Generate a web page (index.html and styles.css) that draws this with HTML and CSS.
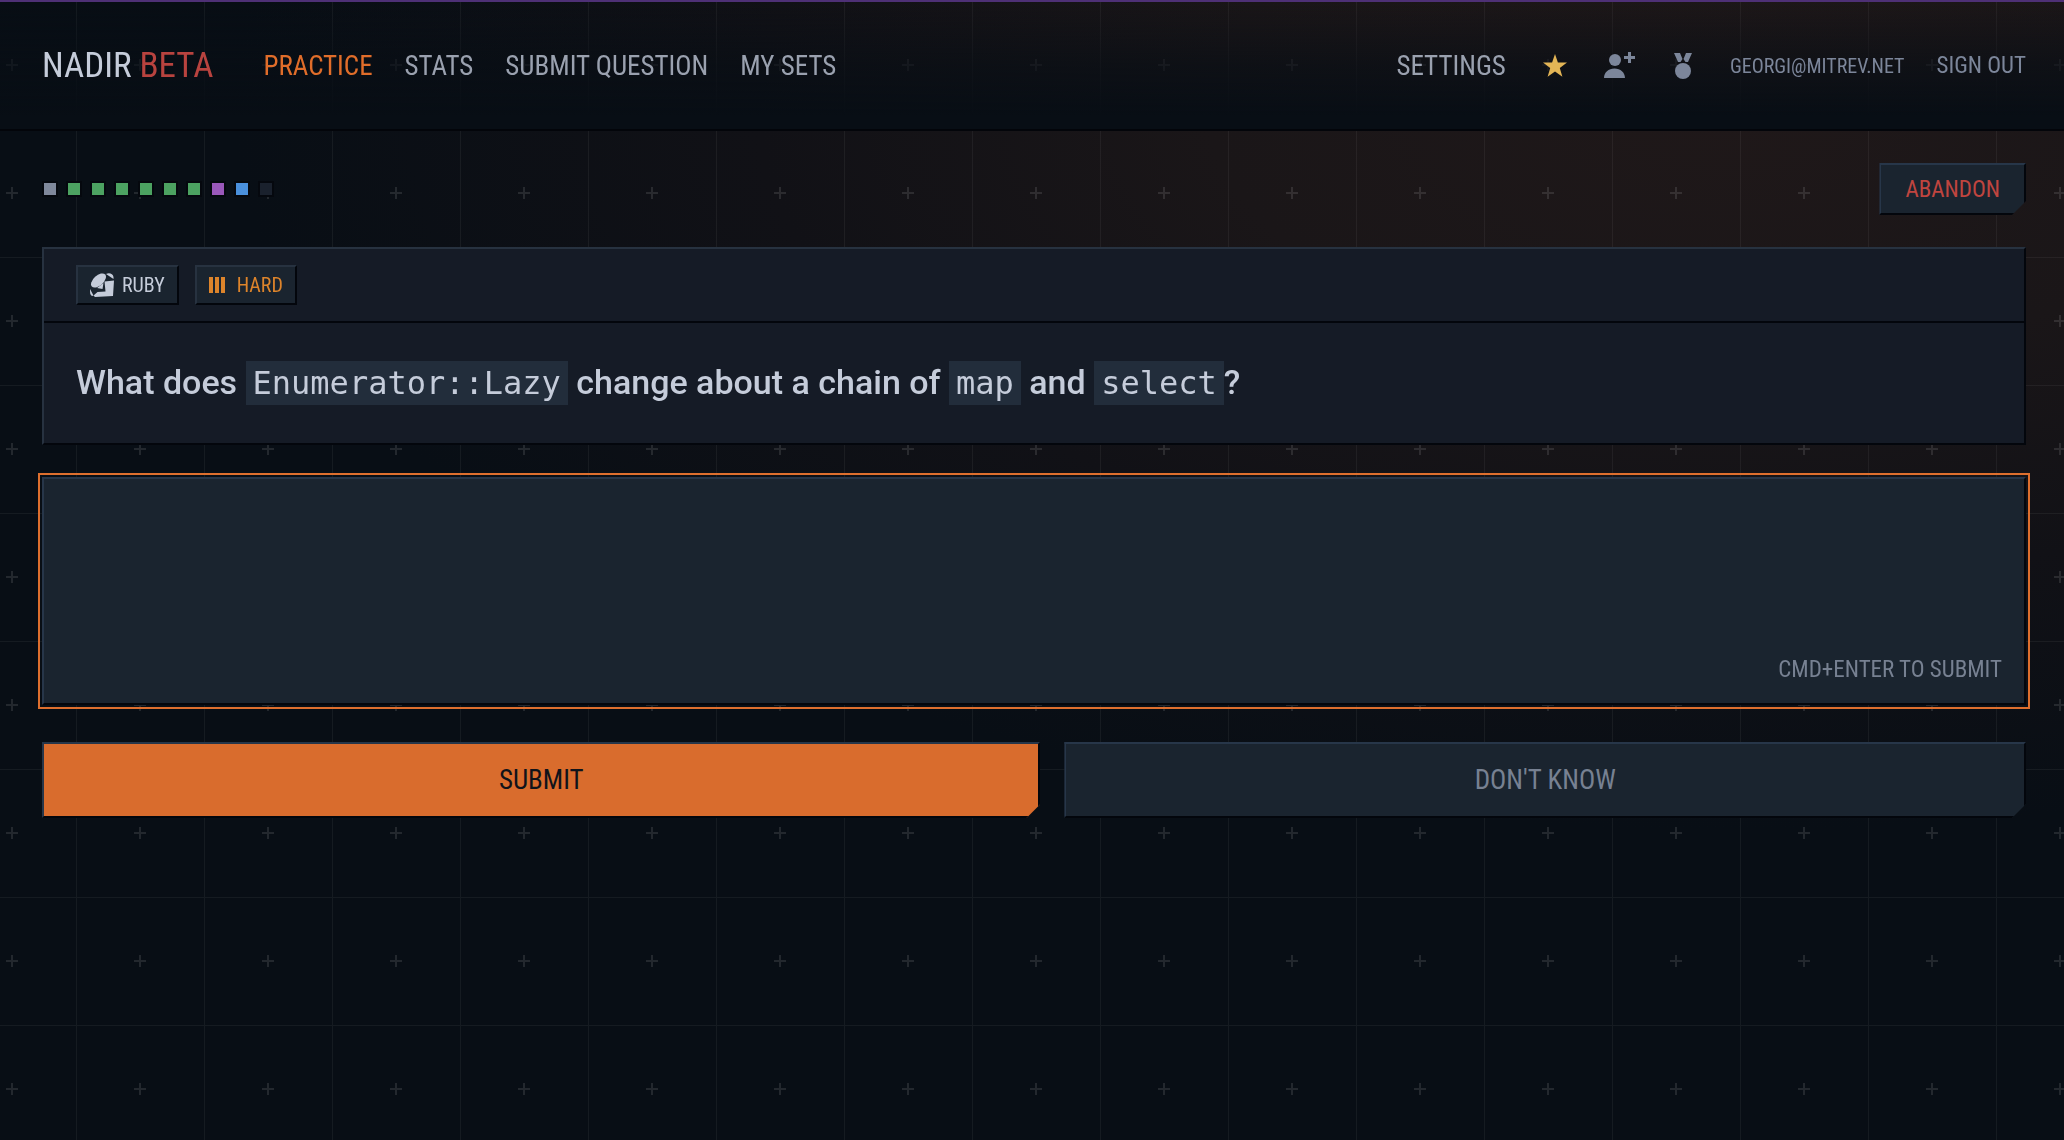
FILE: index.html
```html
<!DOCTYPE html>
<html lang="en">
<head>
    <meta charset="UTF-8">
    <meta name="viewport" content="width=device-width, initial-scale=1.0">
    <title>Nadir - Practice</title>
    <link rel="stylesheet" href="styles.css">
</head>
<body>
    <!-- grid lines and crosses behind everything -->
    <svg class="backdrop" aria-hidden="true">
        <defs>
            <pattern id="grid" width="128" height="128" patternUnits="userSpaceOnUse">
                <path d="M76 0h1v128h-1z M0 1h128v1H0z" fill="#fff" fill-opacity="0.055"/>
                <path d="M6 64h12v2H6z M11 59h2v12h-2z" fill="#fff" fill-opacity="0.11"/>
            </pattern>
        </defs>
        <rect width="100%" height="100%" fill="url(#grid)"/>
    </svg>

    <header class="header">
        <a class="logo" href="#">NADIR <span class="beta">BETA</span></a>
        <nav class="nav">
            <a class="active" href="#">PRACTICE</a>
            <a href="#">STATS</a>
            <a href="#">SUBMIT QUESTION</a>
            <a href="#">MY SETS</a>
        </nav>
        <div class="account">
            <a class="settings" href="#">SETTINGS</a>
            <a class="icon star" href="#" aria-label="Upgrade">
                <svg width="24" height="24" viewBox="0 0 24 24"><path d="M12 0l2.900 8.400 9.100.2-7.200 5.400 2.600 8.800-7.400-5.200-7.400 5.200L7.200 14 0 8.600l9.100-.2z"/></svg>
            </a>
            <a class="icon" href="#" aria-label="Invite">
                <svg width="32" height="28" viewBox="0 0 32 28"><circle cx="11" cy="8" r="6"/><path d="M0 26c0-5.500 4.500-9.500 10.500-9.500S21 20.500 21 26z M24 0h3v4h4v3h-4v4h-3V7h-4V4h4z"/></svg>
            </a>
            <a class="icon" href="#" aria-label="Achievements">
                <svg width="20" height="28" viewBox="0 0 20 28"><circle cx="10" cy="19" r="8"/><path d="M1 1h6l2.500 6-2 3h-2.500z M19 1h-6l-2.500 6 2 3h2.500z"/></svg>
            </a>
            <span class="email">GEORGI@MITREV.NET</span>
            <a class="sign-out" href="#">SIGN OUT</a>
        </div>
    </header>

    <main class="main">
        <div class="toolbar">
            <div class="progress">
                <span class="step skipped"></span>
                <span class="step correct"></span>
                <span class="step correct"></span>
                <span class="step correct"></span>
                <span class="step correct"></span>
                <span class="step correct"></span>
                <span class="step correct"></span>
                <span class="step partial"></span>
                <span class="step current"></span>
                <span class="step"></span>
            </div>
            <button class="btn abandon" type="button">ABANDON</button>
        </div>

        <section class="card">
            <div class="card-head">
                <span class="tag">
                    <svg width="24" height="24" viewBox="0 0 24 24"><ellipse cx="8.500" cy="7.500" rx="9" ry="5" transform="rotate(-42 8.500 7.500)"/><path d="M16 1c3-1.500 7-.5 7.500 3v2z M14.500 8.500l9.500-1-1 15.500-18 1-1.500-1.500 4-3.500 8-.5z M0 16l3.500 6.500-1.500.5C0 22 0 20 0 16z M7 15l6.500-5-1 6z"/></svg>
                    RUBY
                </span>
                <span class="tag hard">
                    <svg width="16" height="16" viewBox="0 0 16 16"><path d="M0 0h4v16H0z M6 0h4v16H6z M12 0h4v16h-4z"/></svg>
                    HARD
                </span>
            </div>
            <h1 class="question">What does <code>Enumerator::Lazy</code> change about a chain of <code>map</code> and <code>select</code>?</h1>
        </section>

        <form class="answer" onsubmit="return false">
            <div class="field">
                <textarea id="answer" aria-label="Your answer" autofocus></textarea>
                <label class="hint" for="answer">CMD+ENTER TO SUBMIT</label>
            </div>
            <div class="actions">
                <button class="btn submit" type="submit">SUBMIT</button>
                <button class="btn skip" type="button">DON'T KNOW</button>
            </div>
        </form>
    </main>
</body>
</html>
```
FILE: styles.css
```css
* {
    box-sizing: border-box;
}
body {
    margin: 0;
    min-height: 100vh;
    color: #c5ccda;
    font-family: "Roboto Condensed", Roboto, sans-serif;
    font-size: 27px;
    background: radial-gradient(ellipse 1500px 720px at 84% 110px, #1f1819 0%, #1a1618 35%, #111116 65%, #080e15 100%) #080e15;
}
a {
    color: inherit;
    text-decoration: none;
}
svg {
    display: block;
    fill: currentColor;
}
.backdrop {
    position: fixed;
    inset: 0;
    width: 100%;
    height: 100%;
    z-index: -1;
}

/* header */
.header {
    display: flex;
    align-items: center;
    height: 131px;
    padding: 0 38px 0 42px;
    border-top: 2px solid #4e3076;
    border-bottom: 2px solid #03050a;
    background: linear-gradient(rgba(8, 14, 21, 0), rgba(8, 14, 21, 0.65) 50%, #080e15 90%);
}
.logo {
    font-size: 35px;
    margin-right: 50px;
}
.beta {
    color: #b8433f;
}
.nav {
    display: flex;
    gap: 32px;
    color: #9aa1af;
}
.nav .active {
    color: #e06d2a;
}
.account {
    display: flex;
    align-items: center;
    margin-left: auto;
    color: #7c869a;
}
.settings {
    color: #9aa1af;
    margin-right: 37px;
}
.icon {
    margin-right: 37px;
}
.star {
    color: #e3b556;
}
.email {
    font-size: 20px;
    margin-right: 32px;
}
.sign-out {
    font-size: 23px;
}

/* page */
.main {
    padding: 32px 38px 0 42px;
}
.toolbar {
    display: flex;
    align-items: center;
    justify-content: space-between;
    margin-bottom: 32px;
}
.progress {
    display: flex;
    gap: 12px;
    padding-left: 2px;
}
.step {
    width: 12px;
    height: 12px;
    background: #1a212d;
    box-shadow: 0 0 0 2px #05080e;
}
.skipped { background: #7f889b; }
.correct { background: #4ca261; }
.partial { background: #9a58ba; }
.current { background: #4a90dc; }

.btn {
    font-family: inherit;
    font-size: 27px;
    color: #778192;
    background: #1a242f;
    border: 2px solid;
    border-color: #273649 #03060c #03060c #273649;
    clip-path: polygon(0 0, 100% 0, 100% calc(100% - 14px), calc(100% - 14px) 100%, 0 100%);
    cursor: pointer;
}
.abandon {
    height: 52px;
    padding: 0 24px;
    font-size: 23px;
    color: #c0453f;
}

.card {
    background: #151b26;
    border: 2px solid;
    border-color: #273240 #03060c #03060c #273240;
    margin-bottom: 32px;
}
.card-head {
    display: flex;
    gap: 16px;
    padding: 16px 32px;
    border-bottom: 2px solid #03060c;
}
.tag {
    display: flex;
    align-items: center;
    gap: 8px;
    height: 40px;
    padding: 0 12px;
    font-size: 20px;
    background: #1a242f;
    border: 2px solid;
    border-color: #273240 #03060c #03060c #273240;
}
.hard {
    color: #dd842b;
    gap: 12px;
}
.question {
    margin: 0;
    padding: 35px 32px 37px;
    font-family: Roboto, sans-serif;
    font-size: 34px;
    font-weight: 500;
    line-height: 48px;
}
.question code {
    padding: 3px 7px;
    font-family: "DejaVu Sans Mono", monospace;
    font-size: 32px;
    font-weight: normal;
    line-height: 1;
    background: #222d3b;
}

.field {
    position: relative;
    margin-bottom: 37px;
}
.field textarea {
    display: block;
    width: 100%;
    height: 228px;
    padding: 24px 32px;
    resize: none;
    color: inherit;
    caret-color: transparent;
    font: inherit;
    background: #1a242f;
    border: 2px solid;
    border-color: #273649 #03060c #03060c #273649;
    outline: 2px solid #de6f2e;
    outline-offset: 2px;
}
.hint {
    position: absolute;
    right: 24px;
    bottom: 22px;
    font-size: 23px;
    color: #778192;
}
.actions {
    display: grid;
    grid-template-columns: 27fr 26fr;
    gap: 24px;
}
.actions .btn {
    height: 76px;
}
.actions .submit {
    color: #10131a;
    background: #d96c2d;
}
```
